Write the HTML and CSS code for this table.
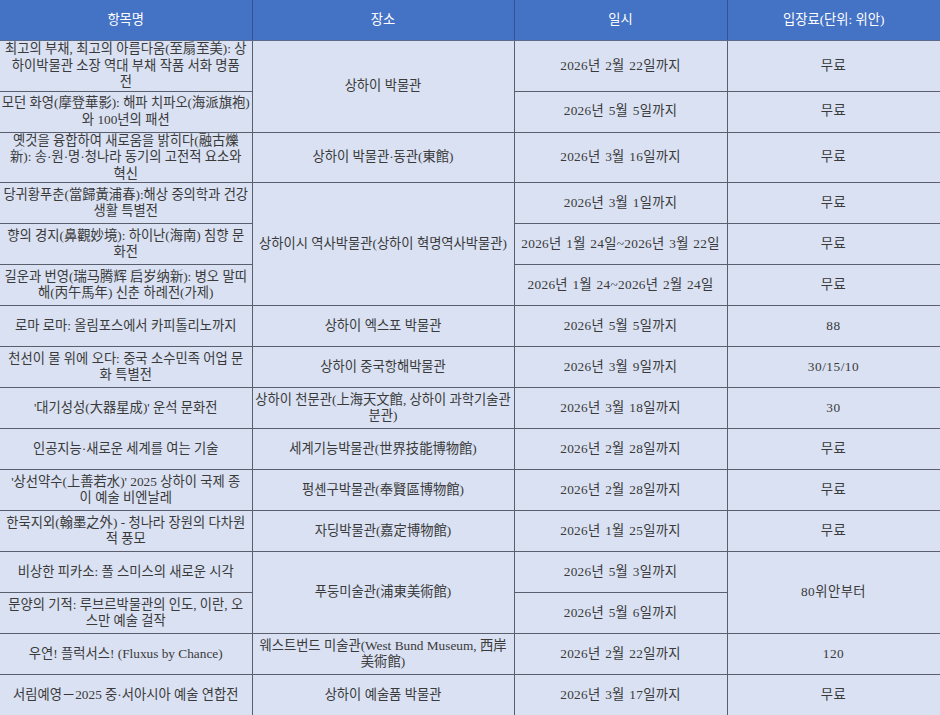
FILE: index.html
```html
<!DOCTYPE html>
<html lang="ko">
<head>
<meta charset="utf-8">
<link rel="stylesheet" href="styles.css">
</head>
<body>
<table class="events">
  <colgroup>
    <col class="c-title">
    <col class="c-place">
    <col class="c-date">
    <col class="c-fee">
  </colgroup>
  <thead>
    <tr class="head">
      <th>항목명</th>
      <th>장소</th>
      <th>일시</th>
      <th>입장료(단위: 위안)</th>
    </tr>
  </thead>
  <tbody>
    <tr>
      <td>최고의 부채, 최고의 아름다움(至扇至美): 상<br>하이박물관 소장 역대 부채 작품 서화 명품<br>전</td>
      <td rowspan="2">상하이 박물관</td>
      <td class="date">2026년 2월 22일까지</td>
      <td class="fee">무료</td>
    </tr>
    <tr>
      <td>모던 화영(摩登華影): 해파 치파오(海派旗袍)<br>와 100년의 패션</td>
      <td class="date">2026년 5월 5일까지</td>
      <td class="fee">무료</td>
    </tr>
    <tr>
      <td>옛것을 융합하여 새로움을 밝히다(融古爍<br>新): 송·원·명·청나라 동기의 고전적 요소와<br>혁신</td>
      <td>상하이 박물관·동관(東館)</td>
      <td class="date">2026년 3월 16일까지</td>
      <td class="fee">무료</td>
    </tr>
    <tr>
      <td>당귀황푸춘(當歸黃浦春):해상 중의학과 건강<br>생활 특별전</td>
      <td rowspan="3">상하이시 역사박물관(상하이 혁명역사박물관)</td>
      <td class="date">2026년 3월 1일까지</td>
      <td class="fee">무료</td>
    </tr>
    <tr>
      <td>향의 경지(鼻觀妙境): 하이난(海南) 침향 문<br>화전</td>
      <td class="date">2026년 1월 24일~2026년 3월 22일</td>
      <td class="fee">무료</td>
    </tr>
    <tr>
      <td>길운과 번영(瑞马腾辉 启岁纳新): 병오 말띠<br>해(丙午馬年) 신춘 하례전(가제)</td>
      <td class="date">2026년 1월 24~2026년 2월 24일</td>
      <td class="fee">무료</td>
    </tr>
    <tr>
      <td>로마 로마: 올림포스에서 카피톨리노까지</td>
      <td>상하이 엑스포 박물관</td>
      <td class="date">2026년 5월 5일까지</td>
      <td class="fee">88</td>
    </tr>
    <tr>
      <td>천선이 물 위에 오다: 중국 소수민족 어업 문<br>화 특별전</td>
      <td>상하이 중국항해박물관</td>
      <td class="date">2026년 3월 9일까지</td>
      <td class="fee">30/15/10</td>
    </tr>
    <tr>
      <td>'대기성성(大器星成)' 운석 문화전</td>
      <td>상하이 천문관(上海天文館, 상하이 과학기술관<br>분관)</td>
      <td class="date">2026년 3월 18일까지</td>
      <td class="fee">30</td>
    </tr>
    <tr>
      <td>인공지능·새로운 세계를 여는 기술</td>
      <td>세계기능박물관(世界技能博物館)</td>
      <td class="date">2026년 2월 28일까지</td>
      <td class="fee">무료</td>
    </tr>
    <tr>
      <td>'상선약수(上善若水)' 2025 상하이 국제 종<br>이 예술 비엔날레</td>
      <td>펑셴구박물관(奉賢區博物館)</td>
      <td class="date">2026년 2월 28일까지</td>
      <td class="fee">무료</td>
    </tr>
    <tr>
      <td>한묵지외(翰墨之外) - 청나라 장원의 다차원<br>적 풍모</td>
      <td>자딩박물관(嘉定博物館)</td>
      <td class="date">2026년 1월 25일까지</td>
      <td class="fee">무료</td>
    </tr>
    <tr>
      <td>비상한 피카소: 폴 스미스의 새로운 시각</td>
      <td rowspan="2">푸둥미술관(浦東美術館)</td>
      <td class="date">2026년 5월 3일까지</td>
      <td class="fee" rowspan="2">80위안부터</td>
    </tr>
    <tr>
      <td>문양의 기적: 루브르박물관의 인도, 이란, 오<br>스만 예술 걸작</td>
      <td class="date">2026년 5월 6일까지</td>
    </tr>
    <tr>
      <td>우연! 플럭서스! (Fluxus by Chance)</td>
      <td>웨스트번드 미술관(West Bund Museum, 西岸<br>美術館)</td>
      <td class="date">2026년 2월 22일까지</td>
      <td class="fee">120</td>
    </tr>
    <tr>
      <td>서림예영－2025 중·서아시아 예술 연합전</td>
      <td>상하이 예술품 박물관</td>
      <td class="date">2026년 3월 17일까지</td>
      <td class="fee">무료</td>
    </tr>
  </tbody>
</table>
</body>
</html>
```

FILE: styles.css
```css
html, body {
  margin: 0;
  padding: 0;
  background: #d9e1f2;
}

.events {
  width: 940px;
  border-collapse: collapse;
  table-layout: fixed;
  font-family: "Liberation Serif", "Noto Sans CJK KR", serif;
  font-size: 13.3px;
  line-height: 16.5px;
  color: #3a3a3a;
}

.c-title { width: 252px; }
.c-place { width: 262px; }
.c-date  { width: 213px; }
.c-fee   { width: 213px; }

.head th {
  height: 40px;
  background: #4472c4;
  color: #ffffff;
  font-weight: normal;
  text-align: center;
  vertical-align: middle;
  padding: 0 2px;
  border-left: 1px solid #2f5597;
  border-bottom: 1px solid #5b6b8c;
}

.head th:first-child {
  border-left: none;
}

.events td {
  height: 40px;
  background: #d9e1f2;
  text-align: center;
  vertical-align: middle;
  padding: 0 1px;
  white-space: nowrap;
  border: 1px solid #5a5f6e;
}

.events td.date {
  letter-spacing: 0.3px;
  word-spacing: 1px;
}

.events td.fee {
  letter-spacing: 0.5px;
}

.events tbody tr td:first-child {
  border-left: none;
}

.events tbody tr:first-child td {
  border-top: none;
}
```
